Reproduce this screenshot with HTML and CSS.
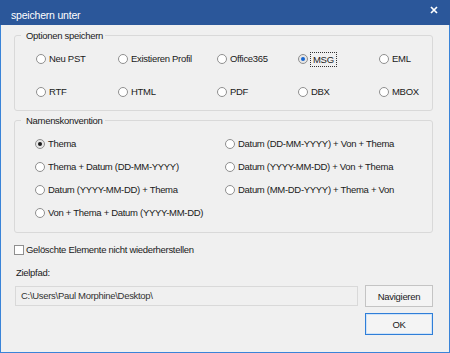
FILE: index.html
```html
<!DOCTYPE html>
<html lang="de">
<head>
    <meta charset="UTF-8">
    <title>speichern unter</title>
<link rel="stylesheet" href="styles.css">
</head>
<body>
<div class="dialog">
    <!-- Titelleiste -->
    <div class="titlebar">
        <span class="title">speichern unter</span>
        <span class="close">
            <svg width="8" height="8" viewBox="0 0 8 8"><path d="M1 1L7 7M7 1L1 7" stroke="#fff" stroke-width="1.7" fill="none"/></svg>
        </span>
    </div>

    <div class="content">
        <!-- Optionen speichern -->
        <div class="group">
            <div class="group-title">Optionen speichern</div>
            <div class="format-grid">
                <label class="option"><span class="radio"></span>Neu PST</label>
                <label class="option"><span class="radio"></span>Existieren Profil</label>
                <label class="option"><span class="radio"></span>Office365</label>
                <label class="option"><span class="radio checked blue"></span><span class="focus">MSG</span></label>
                <label class="option"><span class="radio"></span>EML</label>
                <label class="option"><span class="radio"></span>RTF</label>
                <label class="option"><span class="radio"></span>HTML</label>
                <label class="option"><span class="radio"></span>PDF</label>
                <label class="option"><span class="radio"></span>DBX</label>
                <label class="option"><span class="radio"></span>MBOX</label>
            </div>
        </div>

        <!-- Namenskonvention -->
        <div class="group naming">
            <div class="group-title">Namenskonvention</div>
            <div class="naming-grid">
                <label class="option"><span class="radio checked"></span>Thema</label>
                <label class="option"><span class="radio"></span>Thema + Datum (DD-MM-YYYY)</label>
                <label class="option"><span class="radio"></span>Datum (YYYY-MM-DD) + Thema</label>
                <label class="option"><span class="radio"></span>Von + Thema + Datum (YYYY-MM-DD)</label>
                <label class="option"><span class="radio"></span>Datum (DD-MM-YYYY) + Von + Thema</label>
                <label class="option"><span class="radio"></span>Datum (YYYY-MM-DD) + Von + Thema</label>
                <label class="option"><span class="radio"></span>Datum (MM-DD-YYYY) + Thema + Von</label>
            </div>
        </div>

        <label class="option check-row"><span class="checkbox"></span>Gelöschte Elemente nicht wiederherstellen</label>

        <div class="field-label">Zielpfad:</div>
        <div class="path-row">
            <div class="path-box">C:\Users\Paul Morphine\Desktop\</div>
            <button class="btn">Navigieren</button>
        </div>
        <div class="ok-row">
            <button class="btn btn-default">OK</button>
        </div>
    </div>
</div>
</body>
</html>
```

FILE: styles.css
```css
/* Dialog "speichern unter" */
body {
    margin: 0;
    background: #f0f0f0;
    font-family: "Liberation Sans", Arial, sans-serif;
    font-size: 9.5px;
    letter-spacing: -0.3px;
    color: #1a1a1a;
}

.dialog {
    width: 450px;
    height: 353px;
    display: flex;
    flex-direction: column;
}

/* Titelleiste */
.titlebar {
    height: 25px;
    flex-shrink: 0;
    background: #2b579a;
    color: #fff;
    display: flex;
    justify-content: space-between;
    box-sizing: border-box;
    padding: 6px 12px 0 11px;
}

.titlebar .title {
    font-size: 10.5px;
    letter-spacing: -0.2px;
    line-height: 14px;
    padding-top: 2px;
}

.titlebar .close {
    display: flex;
}

/* Inhalt */
.content {
    flex: 1;
    border: 1px solid #3a84d8;
    border-top: none;
    padding: 10px 16px 0 13px;
    display: flex;
    flex-direction: column;
}

.group {
    border: 1px solid #d9d9d9;
    border-radius: 3px;
    padding: 0 0 11px 21px;
}

.group-title {
    display: table;
    margin: -7px 0 0 -15px;
    padding: 0 2px 0 5px;
    line-height: 13px;
    background: #f0f0f0;
}

.format-grid {
    display: grid;
    grid-template-columns: 82px 99px 81px 81px 1fr;
    grid-auto-rows: 14px;
    row-gap: 19px;
    margin-top: 10px;
}

.naming {
    margin-top: 9px;
    padding-left: 20px;
    padding-bottom: 12px;
}

.naming .group-title {
    margin-left: -14px;
}

.naming-grid {
    display: grid;
    grid-template-columns: 190px 1fr;
    grid-template-rows: repeat(4, 14px);
    grid-auto-flow: column;
    row-gap: 9px;
    margin-top: 10px;
}

/* Optionsfelder */
.option {
    display: flex;
    align-items: center;
    gap: 3px;
    line-height: 14px;
    white-space: nowrap;
}

.radio {
    width: 10px;
    height: 10px;
    box-sizing: border-box;
    border: 1px solid #8f8f8f;
    border-radius: 50%;
    background: #fff;
    display: flex;
    align-items: center;
    justify-content: center;
    flex-shrink: 0;
}

.radio.checked {
    background: #e6e6e6;
}

.radio.checked::after {
    content: '';
    width: 4px;
    height: 4px;
    border-radius: 50%;
    background: #1a1a1a;
}

.radio.blue::after {
    background: #1565d0;
}

.focus {
    outline: 1px dotted #333;
    padding: 0 2px;
    line-height: 13px;
}

.check-row {
    margin-top: 10px;
    gap: 2px;
}

.checkbox {
    width: 10px;
    height: 10px;
    box-sizing: border-box;
    border: 1px solid #8f8f8f;
    background: #fff;
}

.field-label {
    margin-top: 9px;
    line-height: 14px;
    padding-left: 2px;
}

/* Zielpfad */
.path-row {
    display: flex;
    align-items: center;
    gap: 7px;
    margin-top: 5px;
}

.path-box {
    flex: 1;
    height: 20px;
    box-sizing: border-box;
    border: 1px solid #d9d9d9;
    background: #f0f0f0;
    padding: 0 5px;
    line-height: 18px;
    color: #333;
    margin-left: 1px;
}

.btn {
    width: 68px;
    height: 22px;
    border: 1px solid #c4c4c4;
    background: #f4f4f4;
    font-family: inherit;
    font-size: 9.5px;
    letter-spacing: -0.3px;
    color: #1a1a1a;
    padding: 0;
}

.ok-row {
    display: flex;
    justify-content: flex-end;
    margin-top: 6px;
}

.btn-default {
    border: 1px solid #2f7ed8;
    box-shadow: inset 0 0 0 1px #cfe3f8;
}
```
